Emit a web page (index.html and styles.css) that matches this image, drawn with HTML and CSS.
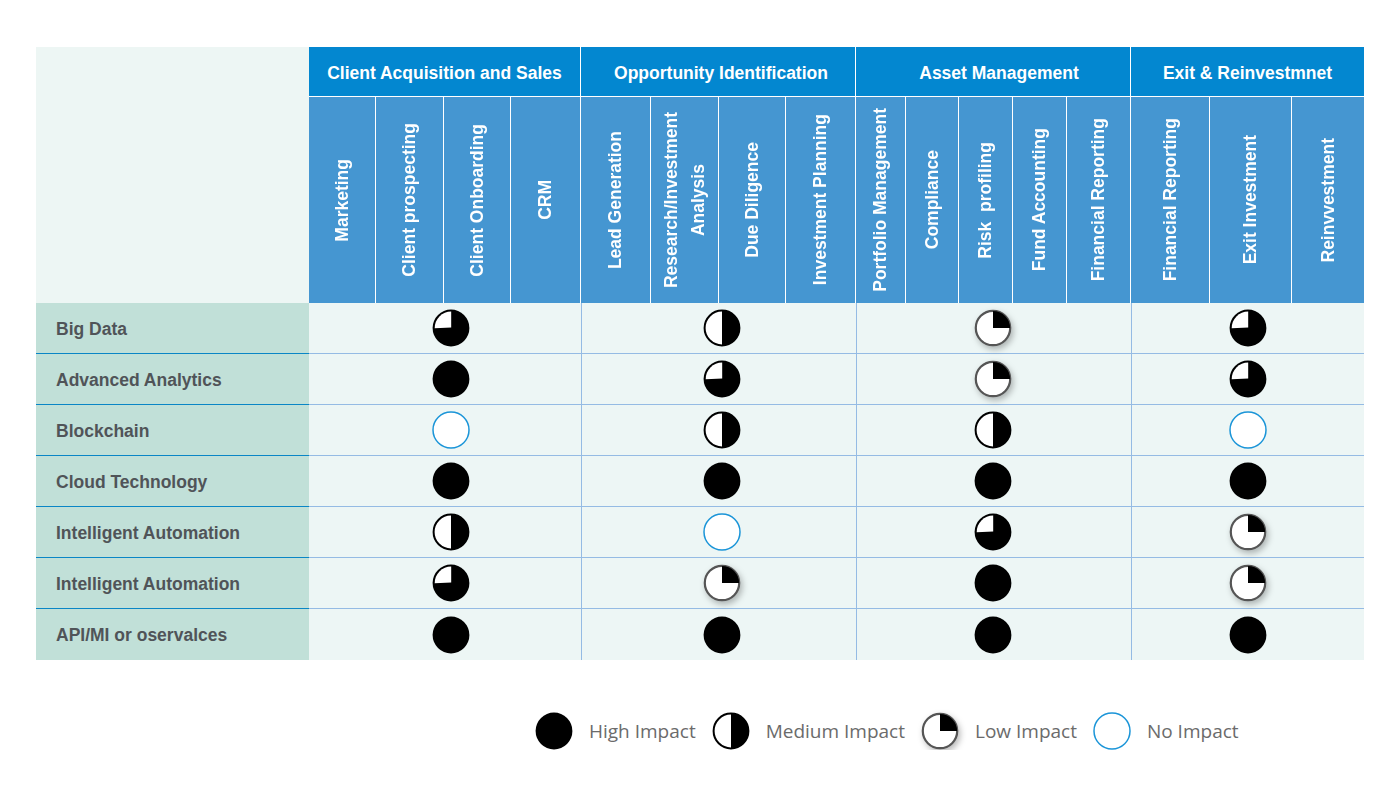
FILE: index.html
```html
<!DOCTYPE html>
<html lang="en">
<head>
<meta charset="utf-8">
<title>Technology Impact Matrix</title>
<link rel="stylesheet" href="styles.css">
</head>
<body>
<svg width="0" height="0" class="defs" aria-hidden="true">
  <defs>
    <symbol id="i-high" viewBox="0 0 38 38"><circle cx="19" cy="19" r="18.4" fill="#000"/></symbol>
    <symbol id="i-med" viewBox="0 0 38 38"><circle cx="19" cy="19" r="17.4" fill="#fff" stroke="#000" stroke-width="2"/><path d="M19 1.6 A17.4 17.4 0 0 1 19 36.4 Z" fill="#000"/></symbol>
    <symbol id="i-tq" viewBox="0 0 38 38"><circle cx="19" cy="19" r="18.4" fill="#000"/><path d="M19.2 18.6 L19.2 2.6 A16.4 16.4 0 0 0 2.7 19.2 Z" fill="#fff"/></symbol>
    <symbol id="i-low" viewBox="0 0 38 38"><circle cx="19" cy="19" r="17.2" fill="#fff" stroke="#555" stroke-width="2.2"/><path d="M19 1.9 A17.1 17.1 0 0 1 36.1 19 L19 19 Z" fill="#000"/></symbol>
    <symbol id="i-none" viewBox="0 0 38 38"><circle cx="19" cy="19" r="18" fill="#fff" stroke="#1b95d8" stroke-width="1.5"/></symbol>
  </defs>
</svg>

<main class="page">
  <div class="matrix">
    <div class="corner"></div>

    <div class="group g1">Client Acquisition and Sales</div>
    <div class="group g2">Opportunity Identification</div>
    <div class="group g3">Asset Management</div>
    <div class="group g4">Exit &amp; Reinvestmnet</div>

    <div class="sub"><span>Marketing</span></div>
    <div class="sub"><span>Client prospecting</span></div>
    <div class="sub"><span>Client Onboarding</span></div>
    <div class="sub end"><span>CRM</span></div>

    <div class="sub"><span>Lead Generation</span></div>
    <div class="sub"><span>Research/Investment<br>Analysis</span></div>
    <div class="sub"><span>Due Diligence</span></div>
    <div class="sub end"><span>Investment Planning</span></div>

    <div class="sub"><span>Portfolio Management</span></div>
    <div class="sub"><span>Compliance</span></div>
    <div class="sub"><span>Risk&nbsp; profiling</span></div>
    <div class="sub"><span>Fund Accounting</span></div>
    <div class="sub end"><span>Financial Reporting</span></div>

    <div class="sub"><span>Financial Reporting</span></div>
    <div class="sub"><span>Exit Investment</span></div>
    <div class="sub last"><span>Reinvvestment</span></div>

    <!-- Row 1 -->
    <div class="label">Big Data</div>
    <div class="cell g1"><svg class="ic"><use href="#i-tq"/></svg></div>
    <div class="cell g2"><svg class="ic"><use href="#i-med"/></svg></div>
    <div class="cell g3"><svg class="ic low"><use href="#i-low"/></svg></div>
    <div class="cell g4"><svg class="ic"><use href="#i-tq"/></svg></div>

    <!-- Row 2 -->
    <div class="label">Advanced Analytics</div>
    <div class="cell g1"><svg class="ic"><use href="#i-high"/></svg></div>
    <div class="cell g2"><svg class="ic"><use href="#i-tq"/></svg></div>
    <div class="cell g3"><svg class="ic low"><use href="#i-low"/></svg></div>
    <div class="cell g4"><svg class="ic"><use href="#i-tq"/></svg></div>

    <!-- Row 3 -->
    <div class="label">Blockchain</div>
    <div class="cell g1"><svg class="ic"><use href="#i-none"/></svg></div>
    <div class="cell g2"><svg class="ic"><use href="#i-med"/></svg></div>
    <div class="cell g3"><svg class="ic"><use href="#i-med"/></svg></div>
    <div class="cell g4"><svg class="ic"><use href="#i-none"/></svg></div>

    <!-- Row 4 -->
    <div class="label">Cloud Technology</div>
    <div class="cell g1"><svg class="ic"><use href="#i-high"/></svg></div>
    <div class="cell g2"><svg class="ic"><use href="#i-high"/></svg></div>
    <div class="cell g3"><svg class="ic"><use href="#i-high"/></svg></div>
    <div class="cell g4"><svg class="ic"><use href="#i-high"/></svg></div>

    <!-- Row 5 -->
    <div class="label">Intelligent Automation</div>
    <div class="cell g1"><svg class="ic"><use href="#i-med"/></svg></div>
    <div class="cell g2"><svg class="ic"><use href="#i-none"/></svg></div>
    <div class="cell g3"><svg class="ic"><use href="#i-tq"/></svg></div>
    <div class="cell g4"><svg class="ic low"><use href="#i-low"/></svg></div>

    <!-- Row 6 -->
    <div class="label">Intelligent Automation</div>
    <div class="cell g1"><svg class="ic"><use href="#i-tq"/></svg></div>
    <div class="cell g2"><svg class="ic low"><use href="#i-low"/></svg></div>
    <div class="cell g3"><svg class="ic"><use href="#i-high"/></svg></div>
    <div class="cell g4"><svg class="ic low"><use href="#i-low"/></svg></div>

    <!-- Row 7 -->
    <div class="label lastrow">API/MI or oservalces</div>
    <div class="cell g1 lastrow"><svg class="ic"><use href="#i-high"/></svg></div>
    <div class="cell g2 lastrow"><svg class="ic"><use href="#i-high"/></svg></div>
    <div class="cell g3 lastrow"><svg class="ic"><use href="#i-high"/></svg></div>
    <div class="cell g4 lastrow"><svg class="ic"><use href="#i-high"/></svg></div>
  </div>

  <div class="legend">
    <div class="legend-item"><svg class="ic"><use href="#i-high"/></svg><span>High Impact</span></div>
    <div class="legend-item"><svg class="ic"><use href="#i-med"/></svg><span>Medium Impact</span></div>
    <div class="legend-item"><svg class="ic low"><use href="#i-low"/></svg><span>Low Impact</span></div>
    <div class="legend-item"><svg class="ic"><use href="#i-none"/></svg><span>No Impact</span></div>
  </div>
</main>
</body>
</html>
```

FILE: styles.css
```css
* { box-sizing: border-box; }

html, body {
  margin: 0;
  padding: 0;
  background: #ffffff;
}

.defs { position: absolute; width: 0; height: 0; overflow: hidden; }

.page {
  padding: 47px 36px 0 36px;
  font-family: "Liberation Sans", Arial, sans-serif;
}

.matrix {
  display: grid;
  width: 1328px;
  grid-template-columns:
    273px
    67px 68px 67px 70px
    70px 68px 67px 70px
    50px 53px 54px 54px 64px
    79px 82px 72px;
  grid-template-rows: 50px 206px repeat(7, 51px);
}

.corner {
  grid-row: 1 / 3;
  grid-column: 1;
  background: #edf6f4;
}

.group {
  background: #0387d0;
  color: #ffffff;
  font-weight: bold;
  font-size: 17.5px;
  display: flex;
  align-items: center;
  justify-content: center;
  border-bottom: 1px solid #ffffff;
  border-right: 1px solid #ffffff;
  padding-top: 4px;
}
.group.g1 { grid-column: 2 / 6; }
.group.g2 { grid-column: 6 / 10; padding-left: 6px; }
.group.g3 { grid-column: 10 / 15; padding-left: 12px; }
.group.g4 { grid-column: 15 / 18; border-right: none; }

.sub {
  background: #4596d1;
  border-right: 1px solid #ffffff;
  display: flex;
  align-items: center;
  justify-content: center;
  color: #ffffff;
  font-weight: bold;
  font-size: 17.5px;
}
.sub.last { border-right: none; }
.sub span {
  writing-mode: vertical-rl;
  transform: rotate(180deg);
  text-align: center;
  line-height: 27px;
  white-space: nowrap;
}

.label {
  grid-column: 1;
  background: #c1e0d8;
  border-bottom: 1px solid #0a86c6;
  color: #505458;
  font-weight: bold;
  font-size: 17.5px;
  display: flex;
  align-items: center;
  padding: 2px 0 0 20px;
}

.cell {
  background: #edf6f5;
  border-bottom: 1px solid #95bbe4;
  display: flex;
  align-items: center;
  justify-content: center;
}
.cell.g1 { grid-column: 2 / 6; padding-left: 12px; }
.cell.g2 { grid-column: 6 / 10; border-left: 1px solid #95bbe4; padding-left: 6px; }
.cell.g3 { grid-column: 10 / 15; border-left: 1px solid #95bbe4; padding-right: 3px; }
.cell.g4 { grid-column: 15 / 18; border-left: 1px solid #95bbe4; }

.lastrow { border-bottom: none; }

.ic {
  width: 38px;
  height: 38px;
  display: block;
  flex: none;
}
.ic.low {
  filter: drop-shadow(2px 3px 3px rgba(0, 0, 0, 0.28));
}

.legend {
  display: flex;
  align-items: center;
  margin-top: 52px;
  padding-left: 499px;
  font-family: "Open Sans", "Noto Sans", sans-serif;
  font-size: 19px;
  color: #6b6b6b;
}
.legend-item {
  display: flex;
  align-items: center;
  gap: 16px;
  margin-right: 16px;
}
```
